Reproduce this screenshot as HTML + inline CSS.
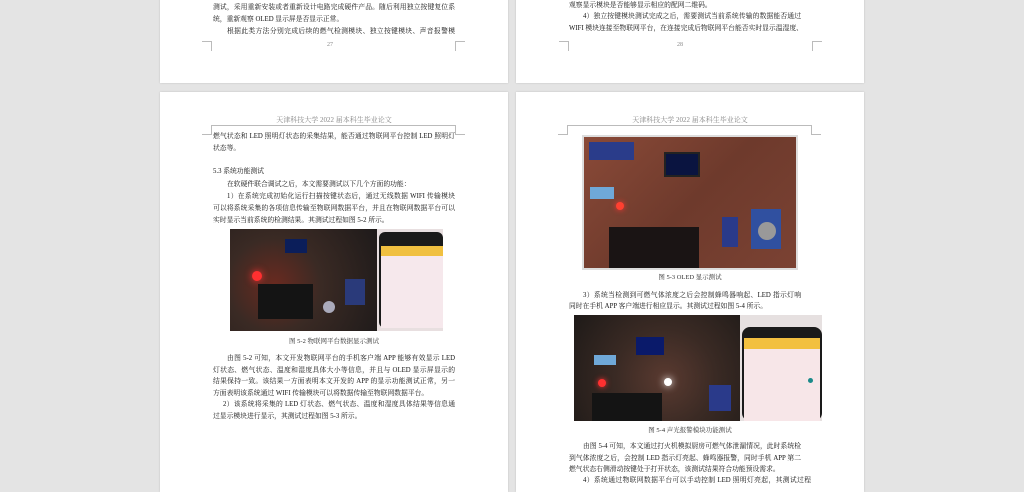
<!DOCTYPE html>
<html><head><meta charset="utf-8"><style>
*{margin:0;padding:0;box-sizing:border-box}
body{width:1024px;height:483px;background:#e4e4e4;position:relative;overflow:hidden;font-family:"Liberation Serif","Noto Serif CJK SC","Noto Sans CJK SC",serif;color:#333}
.pg{position:absolute;background:#fff;box-shadow:0 0 2px rgba(0,0,0,.15)}
.l{position:absolute;font-size:6.8px;line-height:10px;white-space:nowrap;color:#111}
.j{text-align:justify;text-align-last:justify;white-space:normal;height:10px;overflow:hidden}
.c{text-align:center;color:#333}
.h{position:absolute;font-size:7px;color:#888;text-align:center;line-height:9px}
.mk{position:absolute;border-color:#bbb;border-style:solid;width:10px;height:10px}
.img{position:absolute;overflow:hidden}
</style></head><body>

<div class="pg" style="left:160px;top:-2px;width:348px;height:85px"></div>
<div class="l j" style="left:213px;top:3px;width:242px">测试，采用重新安装或者重新设计电路完成硬件产品。随后利用独立按键复位系</div>
<div class="l" style="left:213px;top:15px">统，重新观察 OLED 显示屏是否显示正常。</div>
<div class="l j" style="left:227px;top:27px;width:228px">根据此类方法分别完成后续的燃气检测模块、独立按键模块、声音报警模块、</div>
<div class="h" style="left:300px;top:41px;width:60px;font-size:6px">27</div>
<div class="mk" style="left:202px;top:41px;border-width:1px 1px 0 0"></div>
<div class="mk" style="left:455px;top:41px;border-width:1px 0 0 1px"></div>

<div class="pg" style="left:516px;top:-2px;width:348px;height:85px"></div>
<div class="l" style="left:569px;top:1px">观察显示模块是否能够显示相应的配网二维码。</div>
<div class="l j" style="left:583px;top:12px;width:218px">4）独立按键模块测试完成之后，需要测试当前系统传输的数据能否通过</div>
<div class="l" style="left:569px;top:24px">WIFI 模块连接至物联网平台，在连接完成后物联网平台能否实时显示温湿度、</div>
<div class="h" style="left:650px;top:41px;width:60px;font-size:6px">28</div>
<div class="mk" style="left:559px;top:41px;border-width:1px 1px 0 0"></div>
<div class="mk" style="left:812px;top:41px;border-width:1px 0 0 1px"></div>

<div class="pg" style="left:160px;top:92px;width:348px;height:400px"></div>
<div class="h" style="left:213px;top:116px;width:242px">天津科技大学 2022 届本科生毕业论文</div>
<div style="position:absolute;left:212px;top:125px;width:244px;border-top:1px solid #bbb"></div>
<div class="mk" style="left:202px;top:125px;border-width:0 1px 1px 0"></div>
<div class="mk" style="left:455px;top:125px;border-width:0 0 1px 1px"></div>
<div class="l j" style="left:213px;top:132px;width:242px">燃气状态和 LED 照明灯状态的采集结果，能否通过物联网平台控制 LED 照明灯</div>
<div class="l" style="left:213px;top:144px">状态等。</div>
<div class="l" style="left:213px;top:167px">5.3 系统功能测试</div>
<div class="l" style="left:227px;top:180px">在软硬件联合调试之后，本文需要测试以下几个方面的功能：</div>
<div class="l j" style="left:227px;top:192px;width:228px">1）在系统完成初始化运行扫描按键状态后，通过无线数据 WIFI 传输模块</div>
<div class="l j" style="left:213px;top:204px;width:242px">可以将系统采集的各项信息传输至物联网数据平台，并且在物联网数据平台可以</div>
<div class="l" style="left:213px;top:216px">实时显示当前系统的检测结果。其测试过程如图 5-2 所示。</div>
<div class="img" style="left:230px;top:229px;width:147px;height:102px;background:radial-gradient(circle at 30% 55%,#6a2a20 0,#3a2a24 40%,#1e1a1a 100%)">
<div style="position:absolute;left:55px;top:10px;width:22px;height:14px;background:#0b1e5a"></div>
<div style="position:absolute;left:22px;top:42px;width:10px;height:10px;border-radius:50%;background:#ff3030;box-shadow:0 0 8px #f33"></div>
<div style="position:absolute;left:28px;top:55px;width:55px;height:35px;background:#141414"></div>
<div style="position:absolute;left:115px;top:50px;width:20px;height:26px;background:#2a3a7a"></div>
<div style="position:absolute;left:93px;top:72px;width:12px;height:12px;border-radius:50%;background:#aab"></div>
</div>
<div class="img" style="left:377px;top:229px;width:66px;height:102px;background:#e8dfe0">
<div style="position:absolute;left:2px;top:3px;width:64px;height:96px;background:#1a1a1a;border-radius:6px"></div>
<div style="position:absolute;left:4px;top:17px;width:62px;height:10px;background:#f0c040"></div>
<div style="position:absolute;left:4px;top:27px;width:62px;height:72px;background:#f6e8ec"></div>
</div>
<div class="l c" style="left:213px;top:337px;width:242px;font-size:6.5px">图 5-2 物联网平台数据显示测试</div>
<div class="l j" style="left:227px;top:354px;width:228px">由图 5-2 可知，本文开发物联网平台的手机客户端 APP 能够有效显示 LED</div>
<div class="l j" style="left:213px;top:366px;width:242px">灯状态、燃气状态、温度和湿度具体大小等信息，并且与 OLED 显示屏显示的</div>
<div class="l j" style="left:213px;top:377px;width:242px">结果保持一致。该结果一方面表明本文开发的 APP 的显示功能测试正常，另一</div>
<div class="l" style="left:213px;top:389px">方面表明该系统通过 WIFI 传输模块可以将数据传输至物联网数据平台。</div>
<div class="l j" style="left:223px;top:400px;width:232px">2）该系统将采集的 LED 灯状态、燃气状态、温度和湿度具体结果等信息通</div>
<div class="l" style="left:213px;top:412px">过显示模块进行显示，其测试过程如图 5-3 所示。</div>

<div class="pg" style="left:516px;top:92px;width:348px;height:400px"></div>
<div class="h" style="left:569px;top:116px;width:242px">天津科技大学 2022 届本科生毕业论文</div>
<div style="position:absolute;left:568px;top:125px;width:244px;border-top:1px solid #bbb"></div>
<div class="mk" style="left:558px;top:125px;border-width:0 1px 1px 0"></div>
<div class="mk" style="left:811px;top:125px;border-width:0 0 1px 1px"></div>
<div class="img" style="left:582px;top:135px;width:216px;height:135px;background:linear-gradient(135deg,#8a4a38,#6e3a2c 50%,#7b4233);border:2px solid #ddd">
<div style="position:absolute;left:5px;top:5px;width:45px;height:18px;background:#2a3c8a"></div>
<div style="position:absolute;left:80px;top:15px;width:36px;height:25px;background:#0a1440;border:2px solid #222"></div>
<div style="position:absolute;left:6px;top:50px;width:24px;height:12px;background:#6fa8d8"></div>
<div style="position:absolute;left:32px;top:65px;width:8px;height:8px;border-radius:50%;background:#ff4030;box-shadow:0 0 6px #f33"></div>
<div style="position:absolute;left:25px;top:90px;width:90px;height:42px;background:#1a1414"></div>
<div style="position:absolute;left:138px;top:80px;width:16px;height:30px;background:#2a3a8a"></div>
<div style="position:absolute;left:167px;top:72px;width:30px;height:40px;background:#3050a0"></div>
<div style="position:absolute;left:174px;top:85px;width:18px;height:18px;border-radius:50%;background:#999"></div>
</div>
<div class="l c" style="left:569px;top:273px;width:242px;font-size:6.5px">图 5-3 OLED 显示测试</div>
<div class="l j" style="left:583px;top:291px;width:218px">3）系统当检测到可燃气体浓度之后会控制蜂鸣器响起、LED 指示灯响起，</div>
<div class="l" style="left:569px;top:302px">同时在手机 APP 客户端进行相应显示。其测试过程如图 5-4 所示。</div>
<div class="img" style="left:574px;top:315px;width:166px;height:106px;background:radial-gradient(circle at 55% 60%,#5a3a30 0,#3a2a24 45%,#1e1a18 100%)">
<div style="position:absolute;left:62px;top:22px;width:28px;height:18px;background:#0a1a6a"></div>
<div style="position:absolute;left:20px;top:40px;width:22px;height:10px;background:#6fa8d8"></div>
<div style="position:absolute;left:24px;top:64px;width:8px;height:8px;border-radius:50%;background:#ff3030;box-shadow:0 0 6px #f33"></div>
<div style="position:absolute;left:90px;top:63px;width:8px;height:8px;border-radius:50%;background:#fff;box-shadow:0 0 8px #fff"></div>
<div style="position:absolute;left:18px;top:78px;width:70px;height:28px;background:#141414"></div>
<div style="position:absolute;left:135px;top:70px;width:22px;height:26px;background:#2a3a8a"></div>
</div>
<div class="img" style="left:740px;top:315px;width:82px;height:106px;background:#e6e0e0">
<div style="position:absolute;left:2px;top:12px;width:80px;height:94px;background:#1a1a1a;border-radius:8px"></div>
<div style="position:absolute;left:4px;top:23px;width:76px;height:11px;background:#f2c040"></div>
<div style="position:absolute;left:4px;top:34px;width:76px;height:72px;background:#f7e6e8"></div>
<div style="position:absolute;left:68px;top:63px;width:5px;height:5px;border-radius:50%;background:#1a8a8a"></div>
</div>
<div class="l c" style="left:569px;top:426px;width:242px;font-size:6.5px">图 5-4 声光报警模块功能测试</div>
<div class="l j" style="left:583px;top:442px;width:218px">由图 5-4 可知，本文通过打火机模拟厨房可燃气体泄漏情况，此时系统检测</div>
<div class="l j" style="left:569px;top:454px;width:232px">到气体浓度之后，会控制 LED 指示灯亮起、蜂鸣器报警，同时手机 APP 第二项</div>
<div class="l" style="left:569px;top:465px">燃气状态右侧滑动按键处于打开状态，该测试结果符合功能预设需求。</div>
<div class="l j" style="left:583px;top:476px;width:228px">4）系统通过物联网数据平台可以手动控制 LED 照明灯亮起，其测试过程</div>
</body></html>
